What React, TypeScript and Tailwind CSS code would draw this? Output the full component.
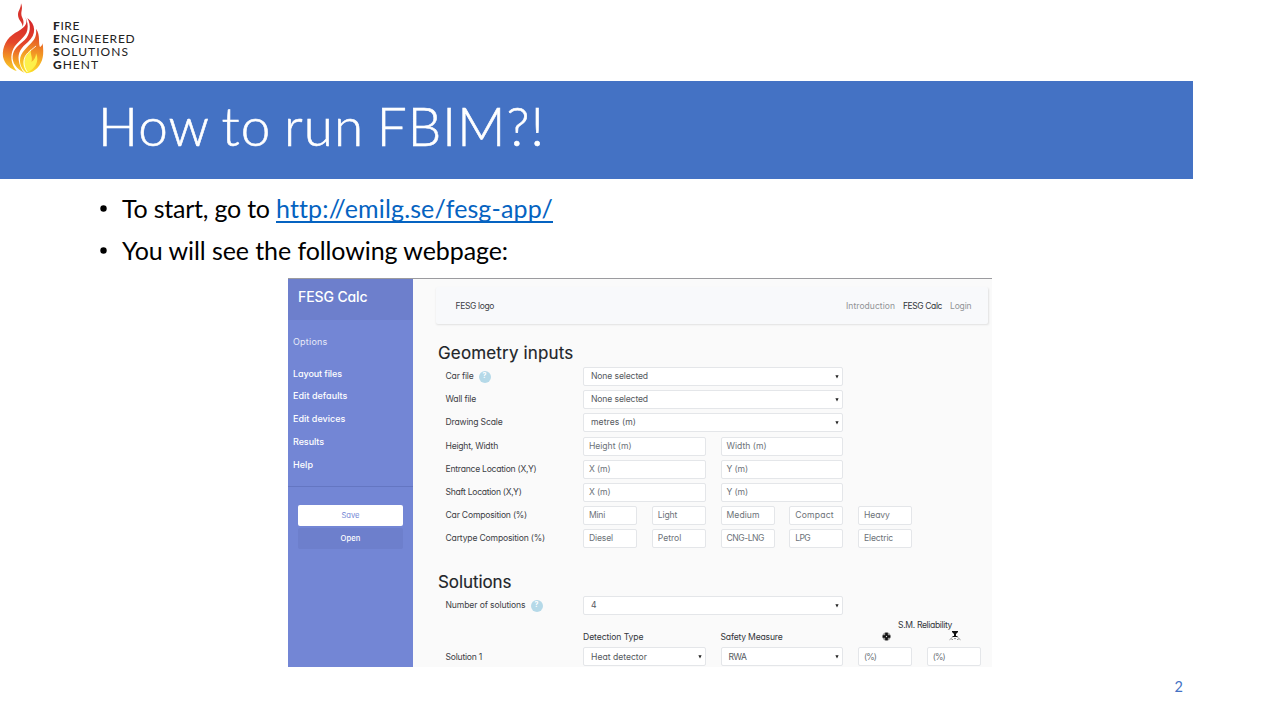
import { ReactNode, useLayoutEffect, useRef, useState } from "react";

function Fit({ w, className = "", children }: { w: number; className?: string; children: ReactNode }) {
  const ref = useRef<HTMLSpanElement>(null);
  const [spacing, setSpacing] = useState(0);
  useLayoutEffect(() => {
    const el = ref.current;
    if (!el) return;
    const natural = el.getBoundingClientRect().width;
    const count = (el.textContent || "").length;
    setSpacing((w - natural) / Math.max(1, count));
  }, [w]);
  return (
    <span ref={ref} className={`inline-block shrink-0 whitespace-pre ${className}`} style={{ letterSpacing: `${spacing}px` }}>
      {children}
    </span>
  );
}

function Flame() {
  return (
    <svg viewBox="0 0 144 240" className="h-[80px] w-[48px] shrink-0" aria-hidden="true">
      <defs>
        <linearGradient id="outer" gradientUnits="userSpaceOnUse" x1="80" y1="50" x2="50" y2="215">
          <stop offset="0" stopColor="#d3222a" />
          <stop offset="0.5" stopColor="#e4472b" />
          <stop offset="0.8" stopColor="#f39a24" />
          <stop offset="1" stopColor="#f8d02a" />
        </linearGradient>
        <linearGradient id="inner" gradientUnits="userSpaceOnUse" x1="110" y1="90" x2="80" y2="220">
          <stop offset="0" stopColor="#dc3529" />
          <stop offset="0.45" stopColor="#f08a24" />
          <stop offset="1" stopColor="#fde428" />
        </linearGradient>
      </defs>
      <path fill="#d9342c" d="M63 10C69 24 64 32 64 42C64 54 76 60 68 80C68 66 54 60 54 44C54 32 63 26 63 10Z" />
      <path fill="url(#outer)" d="M75 50C88 72 70 86 46 98C20 114 6 140 9 170C14 194 32 206 50 213C32 190 30 168 40 146C50 126 78 112 82 90C85 76 82 62 75 50Z" />
      <path fill="url(#outer)" d="M82 54C108 72 110 104 84 126C62 144 54 158 56 180C58 196 64 210 74 219C48 206 36 188 38 168C40 146 58 134 74 120C92 102 94 76 82 54Z" />
      <path fill="url(#inner)" d="M108 86C122 106 114 126 120 142C124 138 127 136 128 130C132 164 130 184 112 204C104 212 94 218 80 220C66 208 60 196 60 182C60 156 84 142 98 124C108 112 110 100 108 86Z" />
      <path fill="#fdf04a" d="M94 146C88 160 100 172 94 186C104 180 108 170 108 160C120 184 104 208 82 218C66 200 66 180 80 164Z" />
      <path fill="none" stroke="#fff" strokeWidth="2.5" d="M108 138C90 154 72 162 72 186C72 198 76 208 82 216" />
    </svg>
  );
}

const field = "flex h-[19px] min-w-0 items-center rounded-[2px] border border-[#e4e6e9] bg-white text-[8.6px] text-[#6c7278]";

function Input({ text, w, wide }: { text: string; w: number; wide?: boolean }) {
  return (
    <div className={`${field} pl-[5px] ${wide ? "col-span-2" : ""}`}>
      <Fit w={w}>{text}</Fit>
    </div>
  );
}

function Select({ text, w, full }: { text: string; w: number; full?: boolean }) {
  return (
    <div className={`${field} justify-between pr-[3px] pl-[7px] text-[#55595e] ${full ? "col-span-4" : "col-span-2"}`}>
      <Fit w={w}>{text}</Fit>
      <svg viewBox="0 0 4 4" className="size-[4px] shrink-0">
        <path d="M.4 .3H3.6L2 3.6Z" fill="#222" />
      </svg>
    </div>
  );
}

function Row({ label, w, help, children }: { label: string; w: number; help?: boolean; children: ReactNode }) {
  return (
    <div className="flex h-[19px] items-center">
      <div className="flex w-[137.5px] shrink-0 items-center gap-[5px] text-[8.6px] text-[#3c4045]">
        <Fit w={w}>{label}</Fit>
        {help && (
          <span className="flex size-[12px] items-center justify-center rounded-full bg-[#b5d9e8] text-[7px] font-bold text-white">?</span>
        )}
      </div>
      <div className="grid w-[397.8px] shrink-0 grid-cols-6 gap-x-[14.8px]">{children}</div>
    </div>
  );
}

const links: [string, number][] = [
  ["Layout files", 49],
  ["Edit defaults", 54.5],
  ["Edit devices", 52.5],
  ["Results", 31],
  ["Help", 20],
];

function Sidebar() {
  return (
    <aside className="flex w-[125px] shrink-0 flex-col bg-[#7386d5] text-white">
      <div className="h-[41px] bg-[#6d7fcc] pt-[8px] pl-[10px] text-[14px] leading-[20px] font-medium">
        <Fit w={69.5}>FESG Calc</Fit>
      </div>
      <div className="mt-[16px] pl-[5px] text-[9px] leading-[12px] text-[#e8ebf8]">
        <Fit w={34.5}>Options</Fit>
      </div>
      <nav className="mt-[13.9px] flex h-[125.1px] flex-col border-b border-[#6476c2] pl-[5px] text-[9px]">
        {links.map(([t, w]) => (
          <a key={t} className="flex h-[22.9px] items-center font-medium">
            <Fit w={w}>{t}</Fit>
          </a>
        ))}
      </nav>
      <div className="mt-[18px] flex flex-col gap-[2px] px-[10px] text-[7.6px]">
        <button className="h-[21px] rounded-[2px] bg-white text-[#7386d5]">
          <Fit w={18}>Save</Fit>
        </button>
        <button className="h-[21px] rounded-[2px] bg-[#6d7fcc] font-medium">
          <Fit w={20}>Open</Fit>
        </button>
      </div>
    </aside>
  );
}

function Webpage() {
  return (
    <section className="ml-[288px] flex h-[389px] w-[704px] shrink-0 overflow-hidden border-t border-[#9b9b9f] bg-[#fafafa] font-['Inter',sans-serif] [font-feature-settings:'cv11']">
      <Sidebar />
      <div className="flex min-w-0 grow flex-col pl-[25px]">
        <header className="mt-[8px] mr-[4px] -ml-[2px] flex h-[37px] shrink-0 items-center rounded-[2px] bg-[#f8f9fb] pt-[2px] pr-[16.5px] pl-[19.5px] text-[8.5px] text-[#3c4045] shadow-[0.5px_1px_2px_rgba(0,0,0,0.1)]">
          <Fit w={38.5}>FESG logo</Fit>
          <div className="ml-auto flex gap-[8px] text-[#909396]">
            <Fit w={49}>Introduction</Fit>
            <Fit w={39} className="text-[#33363a]">FESG Calc</Fit>
            <Fit w={21.5}>Login</Fit>
          </div>
        </header>
        <h2 className="mt-[17px] h-[26.2px] text-[17px] leading-[24px] text-[#212529] [-webkit-text-stroke:0.15px_#212529]">
          <Fit w={135.5}>Geometry inputs</Fit>
        </h2>
        <div className="flex flex-col gap-[4.14px] pl-[7.5px]">
          <Row label="Car file" w={28} help><Select text="None selected" w={57} full /></Row>
          <Row label="Wall file" w={30.5}><Select text="None selected" w={57} full /></Row>
          <Row label="Drawing Scale" w={57}><Select text="metres (m)" w={45} full /></Row>
          <Row label="Height, Width" w={52.5}><Input text="Height (m)" w={42.5} wide /><Input text="Width (m)" w={40} wide /></Row>
          <Row label="Entrance Location (X,Y)" w={91}><Input text="X (m)" w={21.5} wide /><Input text="Y (m)" w={21.5} wide /></Row>
          <Row label="Shaft Location (X,Y)" w={76}><Input text="X (m)" w={21.5} wide /><Input text="Y (m)" w={21.5} wide /></Row>
          <Row label="Car Composition (%)" w={81.5}>
            <Input text="Mini" w={16} /><Input text="Light" w={19.5} /><Input text="Medium" w={33} /><Input text="Compact" w={38.5} /><Input text="Heavy" w={25.5} />
          </Row>
          <Row label="Cartype Composition (%)" w={99.5}>
            <Input text="Diesel" w={24} /><Input text="Petrol" w={23.5} /><Input text="CNG-LNG" w={37.5} /><Input text="LPG" w={14.5} /><Input text="Electric" w={29} />
          </Row>
        </div>
        <h2 className="mt-[22px] h-[26px] text-[17px] leading-[24px] text-[#212529] [-webkit-text-stroke:0.15px_#212529]">
          <Fit w={73.5}>Solutions</Fit>
        </h2>
        <div className="pl-[7.5px]">
          <Row label="Number of solutions" w={80} help><Select text="4" w={6} full /></Row>
          <div className="flex h-[32.4px] pl-[137.5px] text-[8.6px] leading-[12px] text-[#33363a]">
            <div className="grid w-[397.8px] grid-cols-6 gap-x-[14.8px]">
              <div className="col-span-2 flex items-end pb-[4px]"><Fit w={60.5}>Detection Type</Fit></div>
              <div className="col-span-2 flex items-end pb-[4px]"><Fit w={62}>Safety Measure</Fit></div>
              <div className="col-span-2 flex flex-col pt-[4px]">
                <div className="pl-[40px]"><Fit w={54}>S.M. Reliability</Fit></div>
                <div className="grid grid-cols-2 justify-items-center gap-x-[14.8px]">
                  <svg viewBox="0 0 9 9" className="mt-[1px] ml-[2px] size-[9px]">
                    <circle cx="4.5" cy="4.5" r="4.2" fill="#999" />
                    <path d="M4.5 .7V8.3M.7 4.5H8.3" stroke="#111" strokeWidth="2.6" />
                    <circle cx="4.5" cy="4.5" r=".7" fill="#ddd" />
                  </svg>
                  <svg viewBox="0 0 12 10" className="ml-[3px] h-[10px] w-[12px]">
                    <path d="M3 0H9V1L7 3V5H8.5V6H3.5V5H5V3L3 1Z" fill="#111" />
                    <path d="M3.5 6.3L.5 8.8M8.5 6.3L11.5 8.8M2.5 8.5H4M5 7.6H7M8 8.5H9.5" stroke="#777" strokeWidth=".8" fill="none" />
                  </svg>
                </div>
              </div>
            </div>
          </div>
          <Row label="Solution 1" w={36.5}>
            <Select text="Heat detector" w={56} /><Select text="RWA" w={18} /><Input text="(%)" w={12} /><Input text="(%)" w={12} />
          </Row>
        </div>
      </div>
    </section>
  );
}

function Bullet() {
  return (
    <span className="flex w-[24px] items-center pt-[1px] pl-[1.5px]">
      <svg viewBox="0 0 7 7" className="size-[7px]">
        <circle cx="3.5" cy="3.5" r="3.2" />
      </svg>
    </span>
  );
}

export default function App() {
  return (
    <main className="flex h-[720px] w-[1280px] flex-col overflow-hidden bg-white font-['Lato',sans-serif] text-black">
      <div className="flex h-[81px] shrink-0">
        <Flame />
        <div className="pt-[18.5px] pl-[5px] text-[12px] leading-[13.1px] text-[#222]">
          <div><Fit w={27}><b className="font-black">F</b>IRE</Fit></div>
          <div><Fit w={82.5}><b className="font-black">E</b>NGINEERED</Fit></div>
          <div><Fit w={76}><b className="font-black">S</b>OLUTIONS</Fit></div>
          <div><Fit w={46}><b className="font-black">G</b>HENT</Fit></div>
        </div>
      </div>
      <h1 className="h-[98px] w-[1193px] shrink-0 bg-[#4472c4] pt-[10px] pl-[98px] text-[53px] leading-[70px] font-light text-white [-webkit-text-stroke:0.6px_white] [word-spacing:-3px]">
        <Fit w={447}>How to run FBIM?!</Fit>
      </h1>
      <ul className="flex h-[99px] shrink-0 flex-col gap-[6px] pt-[11px] pl-[98px] text-[25px] leading-[36px]">
        <li className="flex h-[36px]">
          <Bullet />
          <Fit w={154}>{"To start, go to "}</Fit>
          <a className="text-[#0563c1]">
            <Fit w={277} className="underline decoration-[1.5px] underline-offset-[3px] [font-feature-settings:'liga'_0] [text-decoration-skip-ink:none]">http://emilg.se/fesg-app/</Fit>
          </a>
        </li>
        <li className="flex h-[36px]">
          <Bullet />
          <Fit w={386}>You will see the following webpage:</Fit>
        </li>
      </ul>
      <Webpage />
      <footer className="flex justify-end pt-[10px] pr-[97px] text-[14.5px] leading-[20px] text-[#4472c4]">2</footer>
    </main>
  );
}
